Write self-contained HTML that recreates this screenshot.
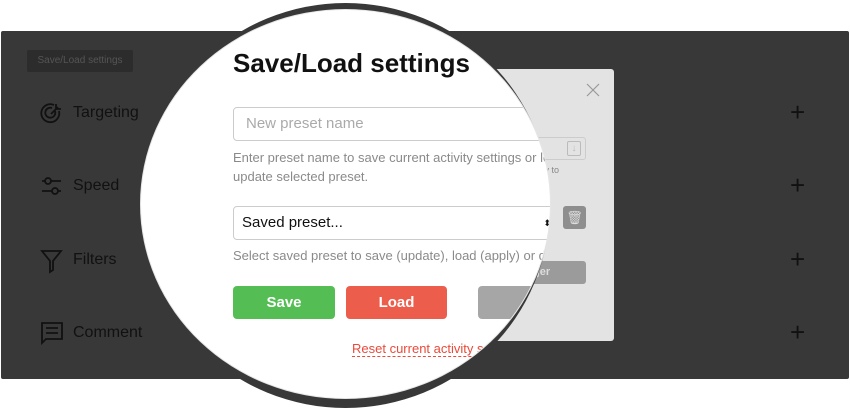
<!DOCTYPE html>
<html><head><style>
*{margin:0;padding:0;box-sizing:border-box}
body{width:850px;height:410px;background:#fff;position:relative;overflow:hidden;font-family:"Liberation Sans",sans-serif}
.a{position:absolute}
.panel{left:1px;top:31px;width:848px;height:348px;background:#383838;border-radius:2px}
.lbl{font-size:16px;color:#111}
.plus{font-size:26px;color:#111;font-weight:300;left:790px}
.modal{left:193px;top:69px;width:421px;height:272px;background:#e3e3e3;border-radius:3px}
.ring{left:141px;top:3px;width:409px;height:405px;border-radius:50%;background:#383838}
.lens{left:141px;top:10px;width:409px;height:388px;border-radius:50%;background:#fff;overflow:hidden;box-shadow:0 0 0 1px #e6e6e6}
.in{position:absolute;left:-141px;top:-10px;width:850px;height:410px}
.help{font-size:13px;color:#8a8a8a;line-height:19px}
.btn{height:33px;border-radius:4px;color:#fff;font-size:15px;font-weight:bold;text-align:center;line-height:33px}
</style></head><body>
<div class="a panel"></div>
<div class="a" style="left:27px;top:50px;width:106px;height:22px;background:#2c2c2c;border-radius:2px;color:#555;font-size:10px;line-height:22px;text-align:center">Save/Load settings</div>

<svg class="a" style="left:38px;top:101px" width="26" height="26" viewBox="0 0 26 26" fill="none" stroke="#111" stroke-width="1.8"><path d="M21 10A9 9 0 1 1 16 4"/><path d="M17 10A5 5 0 1 1 14 7"/><path d="M13 13L20 6M18 3v5h5"/></svg>
<div class="a lbl" style="left:73px;top:104px">Targeting</div>
<svg class="a" style="left:39px;top:174px" width="26" height="26" viewBox="0 0 26 26" fill="none" stroke="#111" stroke-width="1.8"><circle cx="9" cy="7" r="3"/><path d="M3 7h3M12 7h10"/><circle cx="16" cy="17" r="3"/><path d="M3 17h10M19 17h3"/></svg>
<div class="a lbl" style="left:73px;top:177px">Speed</div>
<svg class="a" style="left:40px;top:248px" width="24" height="26" viewBox="0 0 24 26" fill="none" stroke="#111" stroke-width="1.8"><path d="M2 3h19l-8 10v9l-3 2v-11z"/></svg>
<div class="a lbl" style="left:73px;top:251px">Filters</div>
<svg class="a" style="left:40px;top:321px" width="24" height="26" viewBox="0 0 24 26" fill="none" stroke="#111" stroke-width="1.8"><path d="M2 2h20v16H6l-4 4z"/><path d="M6 7h12M6 12h12"/></svg>
<div class="a lbl" style="left:73px;top:324px">Comment</div>
<div class="a plus" style="top:97px">+</div>
<div class="a plus" style="top:170px">+</div>
<div class="a plus" style="top:244px">+</div>
<div class="a plus" style="top:317px">+</div>

<div class="a modal"></div>
<svg class="a" style="left:586px;top:83px" width="14" height="14" viewBox="0 0 14 14" stroke="#999" stroke-width="1.2"><path d="M1 1L13 13M13 1L1 13"/></svg>
<div class="a" style="left:450px;top:137px;width:136px;height:23px;border:1px solid #ccc;border-radius:3px"></div>
<div class="a" style="left:567px;top:141px;width:14px;height:15px;border:1px solid #bbb;border-radius:2px;color:#bbb;font-size:10px;text-align:center;line-height:13px">↓</div>
<div class="a" style="left:540px;top:165px;font-size:9px;color:#888">ity to</div>
<div class="a" style="left:563px;top:206px;width:23px;height:23px;background:#8e8e8e;border-radius:3px;color:#ddd;font-size:13px;text-align:center;line-height:23px">🗑</div>
<div class="a" style="left:478px;top:261px;width:108px;height:23px;background:#9b9b9b;border-radius:3px;color:#ddd;font-size:11px;line-height:23px;padding-left:55px;font-weight:bold">ger</div>

<div class="a ring"></div>
<div class="a lens"><div class="in">
 <div class="a" style="left:233px;top:48px;font-size:26px;font-weight:bold;color:#111">Save/Load settings</div>
 <div class="a" style="left:233px;top:107px;width:340px;height:34px;border:1px solid #ccc;border-radius:4px;font-size:15px;color:#aaa;line-height:32px;padding-left:12px">New preset name</div>
 <div class="a help" style="left:233px;top:148px;width:420px">Enter preset name to save current activity settings or leave empty to update selected preset.</div>
 <div class="a" style="left:233px;top:206px;width:323px;height:34px;border:1px solid #ccc;border-radius:4px;font-size:15px;color:#111;line-height:32px;padding-left:8px">Saved preset...<span style="position:absolute;right:4px;top:0;font-size:9px">⬍</span></div>
 <div class="a help" style="left:233px;top:246px;white-space:nowrap">Select saved preset to save (update), load (apply) or delete.</div>
 <div class="a btn" style="left:233px;top:286px;width:102px;background:#54be55">Save</div>
 <div class="a btn" style="left:346px;top:286px;width:101px;background:#ec5d4b">Load</div>
 <div class="a btn" style="left:478px;top:286px;width:108px;background:#a6a6a6"></div>
 <div class="a" style="left:352px;top:341px;font-size:13px;color:#ea4a3a;border-bottom:1px dashed #ea4a3a;white-space:nowrap">Reset current activity settings</div>
</div></div>
</body></html>
